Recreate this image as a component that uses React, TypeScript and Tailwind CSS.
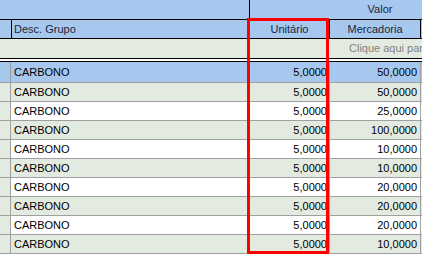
const rows = [
  { desc: "CARBONO", unit: "5,0000", merc: "50,0000" },
  { desc: "CARBONO", unit: "5,0000", merc: "50,0000" },
  { desc: "CARBONO", unit: "5,0000", merc: "25,0000" },
  { desc: "CARBONO", unit: "5,0000", merc: "100,0000" },
  { desc: "CARBONO", unit: "5,0000", merc: "10,0000" },
  { desc: "CARBONO", unit: "5,0000", merc: "10,0000" },
  { desc: "CARBONO", unit: "5,0000", merc: "20,0000" },
  { desc: "CARBONO", unit: "5,0000", merc: "20,0000" },
  { desc: "CARBONO", unit: "5,0000", merc: "20,0000" },
  { desc: "CARBONO", unit: "5,0000", merc: "10,0000" },
];

export default function App() {
  return (
    <div
      className="relative w-[422px] h-[255px] overflow-hidden bg-white text-[11px] leading-none"
      style={{ fontFamily: '"Liberation Sans", Arial, sans-serif' }}
    >
      {/* Cabeçalho - linha 1 */}
      <div className="flex h-[20px] bg-[#a7c8ee] border-b border-black text-[#1b2540]">
        <div className="w-[250px] shrink-0 border-r border-black" />
        <div className="w-[260px] shrink-0 flex items-center justify-center">Valor</div>
      </div>

      {/* Cabeçalho - linha 2 */}
      <div className="flex h-[19px] bg-[#a7c8ee] border-b border-black text-[#1b2540]">
        <div className="w-[12px] shrink-0 border-r border-black" />
        <div className="w-[238px] shrink-0 border-r border-black flex items-center pl-[2px]">Desc. Grupo</div>
        <div className="w-[80px] shrink-0 border-r border-black flex items-center justify-center">Unitário</div>
        <div className="w-[91px] shrink-0 border-r border-black flex items-center justify-center">Mercadoria</div>
        <div className="flex-1" />
      </div>

      {/* Linha de filtro */}
      <div className="h-[19px] bg-[#e3ebe0] flex items-center pl-[349px] text-[#808080] whitespace-nowrap">
        Clique aqui para definir um filtro
      </div>
      <div className="h-px bg-black" />
      <div className="h-[2px] bg-white" />
      <div className="h-px bg-black" />

      {/* Dados */}
      {rows.map((r, i) => {
        const selected = i === 0;
        const bg = selected ? "bg-[#a7c8ee]" : i % 2 === 1 ? "bg-[#e3ebe0]" : "bg-white";
        return (
          <div
            key={i}
            className={`flex border-b border-[#a0a0a0] text-black ${selected ? "h-[21px]" : "h-[19px]"} ${bg}`}
          >
            <div
              className={`w-[11px] shrink-0 border-r border-[#a0a0a0] ${selected ? "bg-[#a7c8ee]" : "bg-[#e3ebe0]"}`}
            />
            <div className="w-[239px] shrink-0 border-r border-[#a0a0a0] flex items-center pl-[3px]">{r.desc}</div>
            <div className="w-[80px] shrink-0 border-r border-[#a0a0a0] flex items-center justify-end pr-[2px]">{r.unit}</div>
            <div className="w-[91px] shrink-0 border-r border-[#a0a0a0] flex items-center justify-end pr-[3px]">{r.merc}</div>
            <div className="flex-1" />
          </div>
        );
      })}

      {/* Destaque da coluna Unitário */}
      <div className="absolute left-[247px] top-[18px] w-[82px] h-[236px] border-[3px] border-[#ff0000] pointer-events-none" />
    </div>
  );
}
